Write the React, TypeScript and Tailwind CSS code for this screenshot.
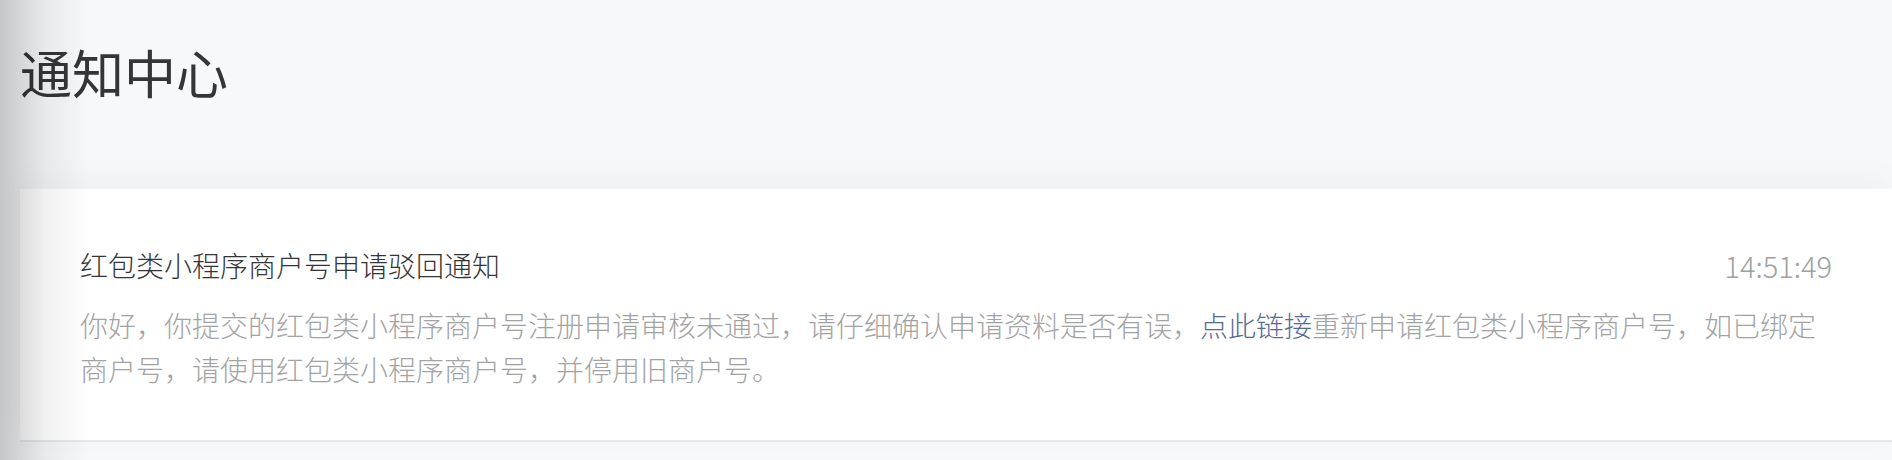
import React from "react";

const cjk = { fontFamily: '"Noto Sans CJK SC", "Noto Sans", sans-serif' };

interface Notice {
  title: string;
  time: string;
  before: string;
  link: string;
  after: string;
}

const notice: Notice = {
  title: "红包类小程序商户号申请驳回通知",
  time: "14:51:49",
  before: "你好，你提交的红包类小程序商户号注册申请审核未通过，请仔细确认申请资料是否有误，",
  link: "点此链接",
  after: "重新申请红包类小程序商户号，如已绑定商户号，请使用红包类小程序商户号，并停用旧商户号。",
};

const NoticeCard: React.FC<{ notice: Notice }> = ({ notice }) => {
  return (
    <div className="bg-white border-b-2 border-[#e6e7e9] pl-[60px] pr-[60px] pt-[56px] pb-[49px] shadow-[0_-10px_30px_rgba(0,0,0,0.035)]">
      <div className="flex items-center justify-between">
        <h3 className="text-[28px] leading-[40px] text-[#353535] font-light">{notice.title}</h3>
        <span className="text-[29px] leading-[40px] text-[#a0a0a0] font-light">{notice.time}</span>
      </div>
      <p className="mt-[18px] text-[28px] leading-[44px] text-[#a3a3a3] font-light">
        {notice.before}
        <span className="text-[#576b95]">{notice.link}</span>
        {notice.after}
      </p>
    </div>
  );
};

export default function App() {
  return (
    <div className="relative min-h-[460px] bg-[#f7f8fa] overflow-hidden" style={cjk}>
      <div className="pl-[20px]">
        <h1 className="pt-[44px] text-[52px] leading-[56px] text-[#353535]">通知中心</h1>
        <div className="mt-[89px]">
          <NoticeCard notice={notice} />
        </div>
      </div>
      <div className="pointer-events-none absolute inset-y-0 left-0 w-[90px] bg-gradient-to-r from-[rgba(0,0,0,0.2)] via-[rgba(0,0,0,0.06)] to-transparent" />
    </div>
  );
}
